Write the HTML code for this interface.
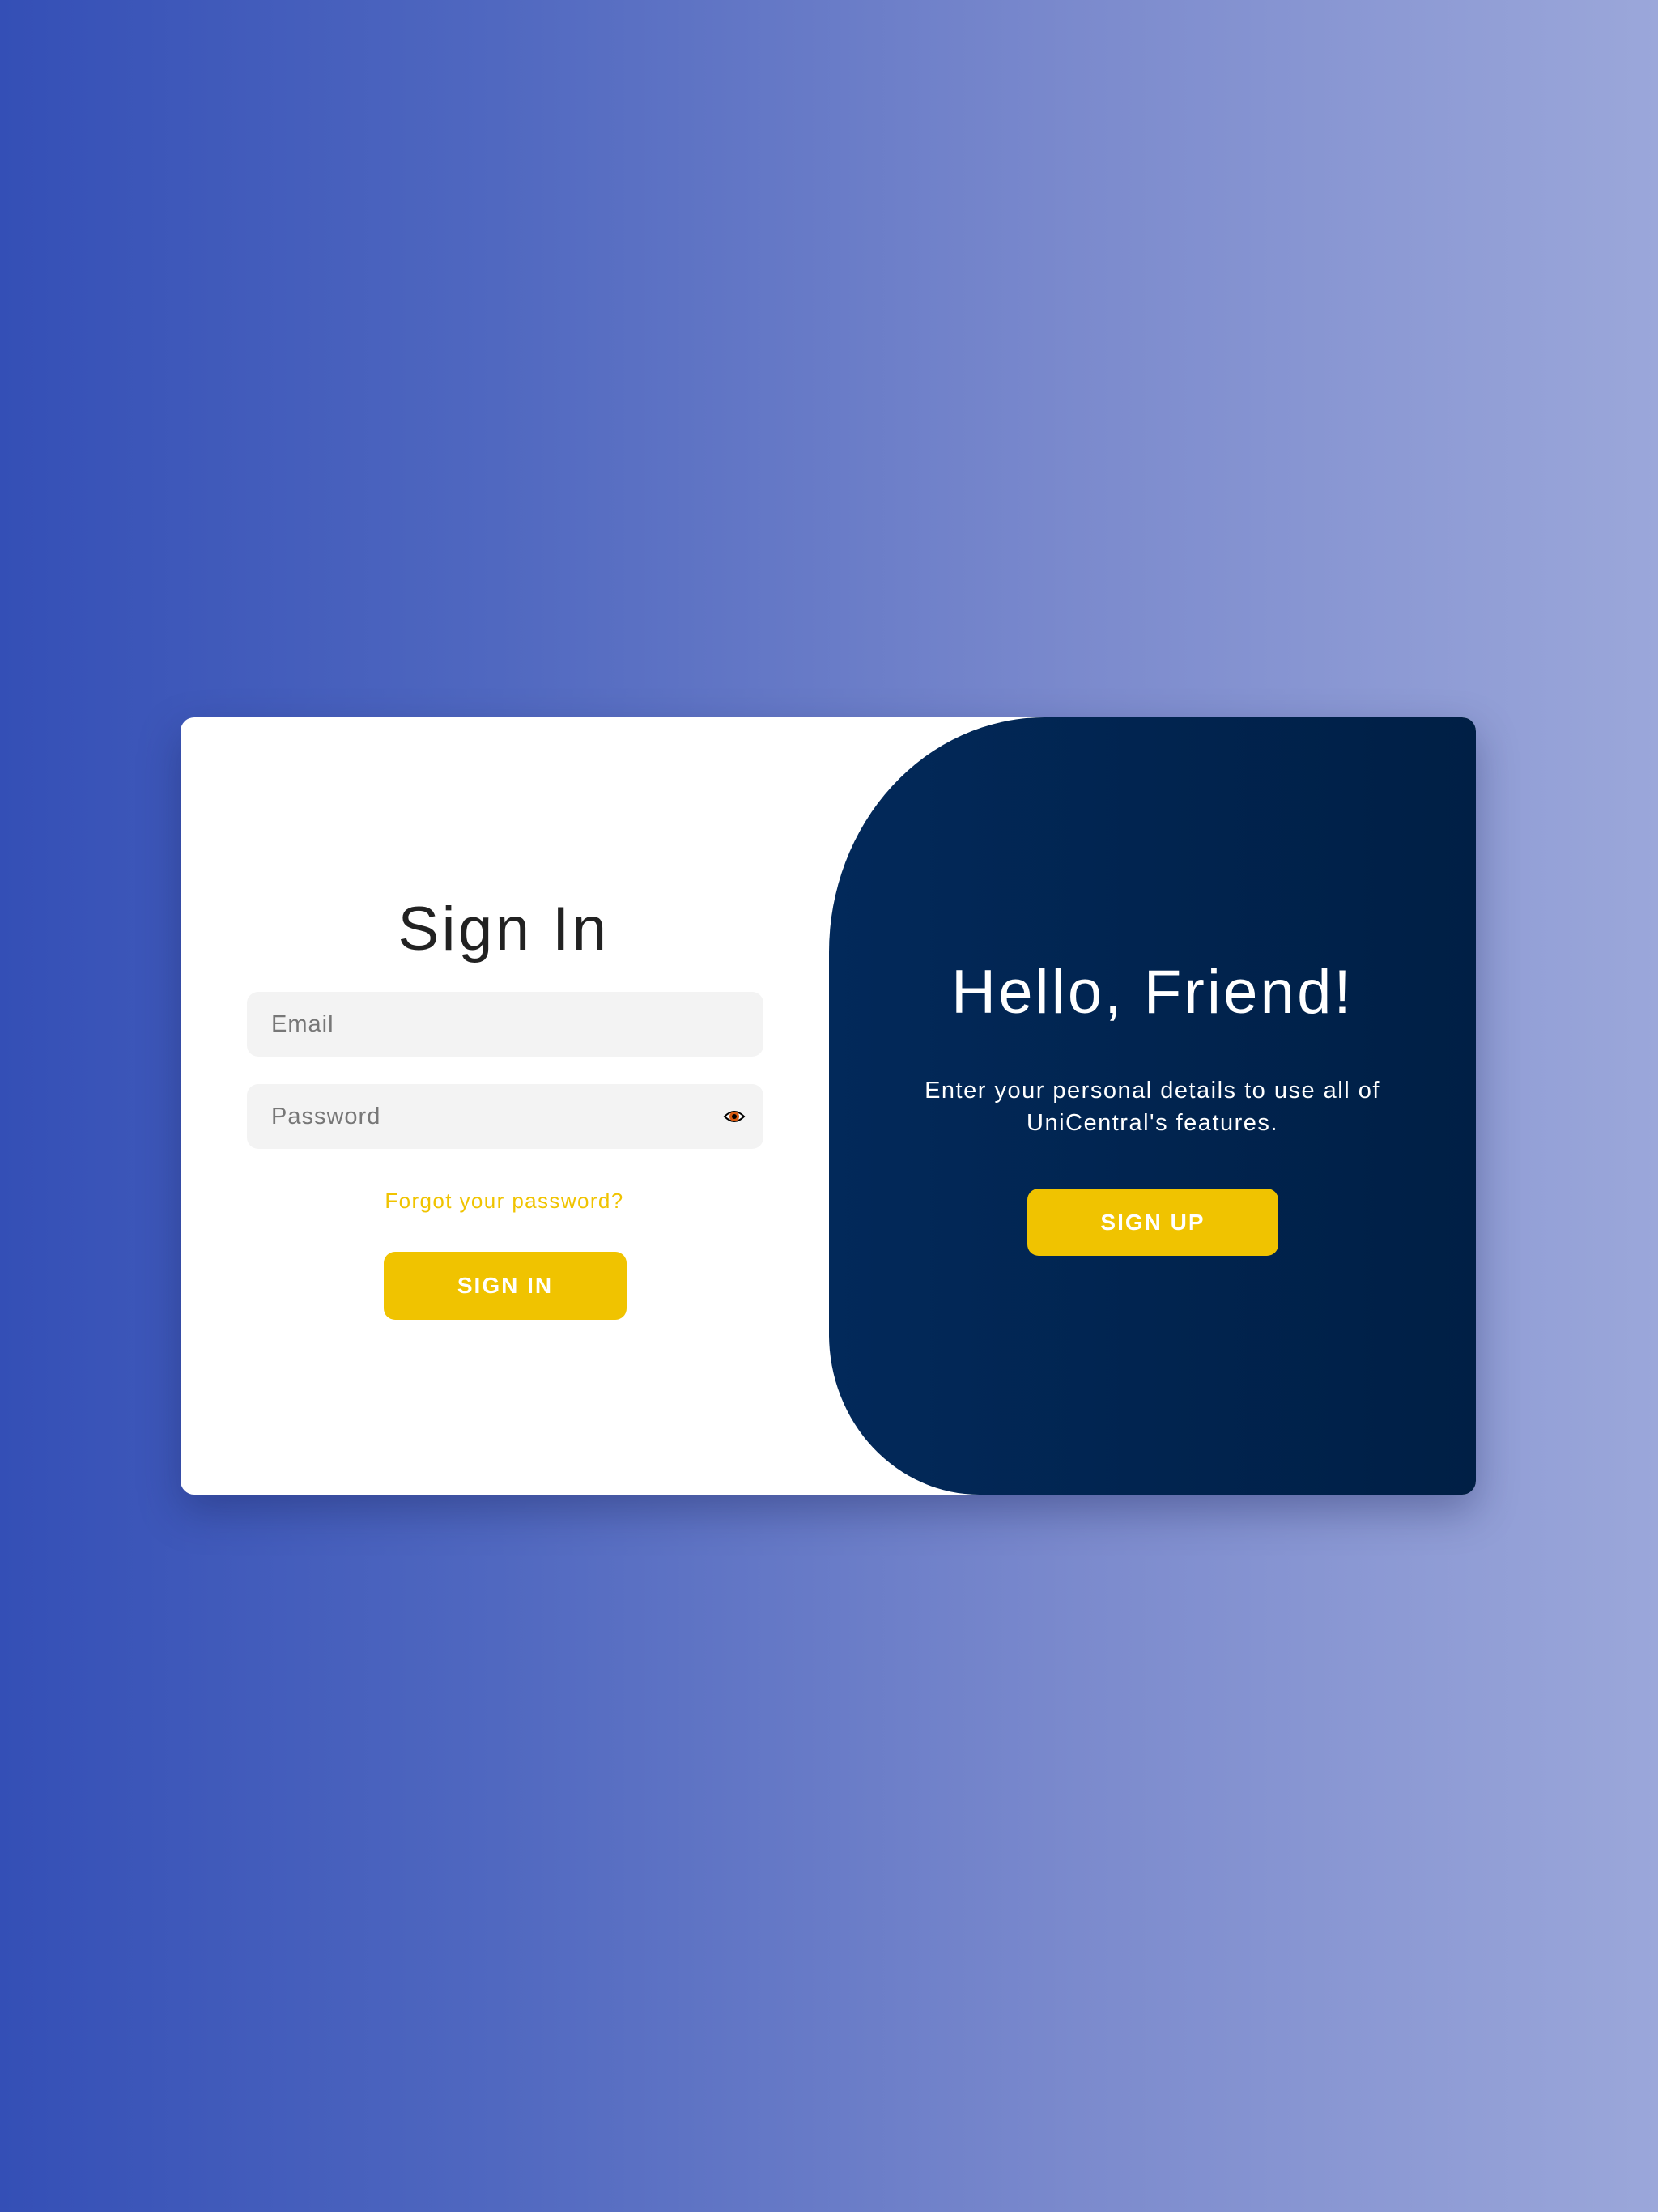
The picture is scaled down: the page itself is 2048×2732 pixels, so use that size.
<!DOCTYPE html>
<html><head><meta charset="utf-8"><style>
html,body{margin:0;padding:0}
body{width:2048px;height:2732px;background:linear-gradient(90deg,#344fb6 0%,#5068c0 30%,#7b8acd 65%,#9ba7da 100%);position:relative;overflow:hidden;font-family:"Liberation Sans","DejaVu Sans",sans-serif}
.card{position:absolute;left:223px;top:886px;width:1600px;height:960px;background:#fff;border-radius:17px;box-shadow:0 20px 50px rgba(20,30,80,.35);overflow:hidden}
.panel{position:absolute;left:801px;top:0;right:0;bottom:0;background:linear-gradient(90deg,#02295a,#001f45);border-radius:266px 0 0 186px / 290px 0 0 198px}
h1{margin:0;font-weight:400}
.si{position:absolute;left:399px;transform:translateX(-50%);top:218px;font-size:76px;color:#222;white-space:nowrap;letter-spacing:3.5px}
.inp{position:absolute;left:82px;width:638px;height:80px;background:#f3f3f3;border-radius:14px;color:#777;font-size:29px;line-height:80px;padding-left:30px;box-sizing:border-box;letter-spacing:1px}
.fg{position:absolute;left:0;width:800px;text-align:center;top:582px;color:#f0c300;font-size:26px;letter-spacing:1.4px}
.btn{position:absolute;background:#f0c300;color:#fff;font-weight:700;font-size:28px;letter-spacing:2px;text-align:center;border-radius:14px}
.hf{position:absolute;left:801px;right:0;text-align:center;top:296px;color:#fff;font-size:76px;letter-spacing:3.2px}
.p{position:absolute;left:801px;right:0;text-align:center;top:441px;color:#fff;font-size:29px;line-height:40px;letter-spacing:1.5px}
</style></head><body>
<div class="card">
<div class="panel"></div>
<h1 class="si">Sign In</h1>
<div class="inp" style="top:339px">Email</div>
<div class="inp" style="top:453px">Password
<svg style="position:absolute;right:22px;top:27px" width="28" height="26" viewBox="0 0 28 26"><path d="M2 13 Q14 1 26 13 Q14 25 2 13Z" fill="#fff" stroke="#000" stroke-width="2"/><circle cx="14" cy="13" r="6" fill="#d85a10"/><circle cx="14" cy="13" r="3" fill="#000"/></svg></div>
<div class="fg">Forgot your password?</div>
<div class="btn" style="left:251px;top:660px;width:300px;height:84px;line-height:84px">SIGN IN</div>
<h1 class="hf">Hello, Friend!</h1>
<div class="p">Enter your personal details to use all of<br>UniCentral's features.</div>
<div class="btn" style="left:1046px;top:582px;width:310px;height:83px;line-height:83px">SIGN UP</div>
</div>
</body></html>
